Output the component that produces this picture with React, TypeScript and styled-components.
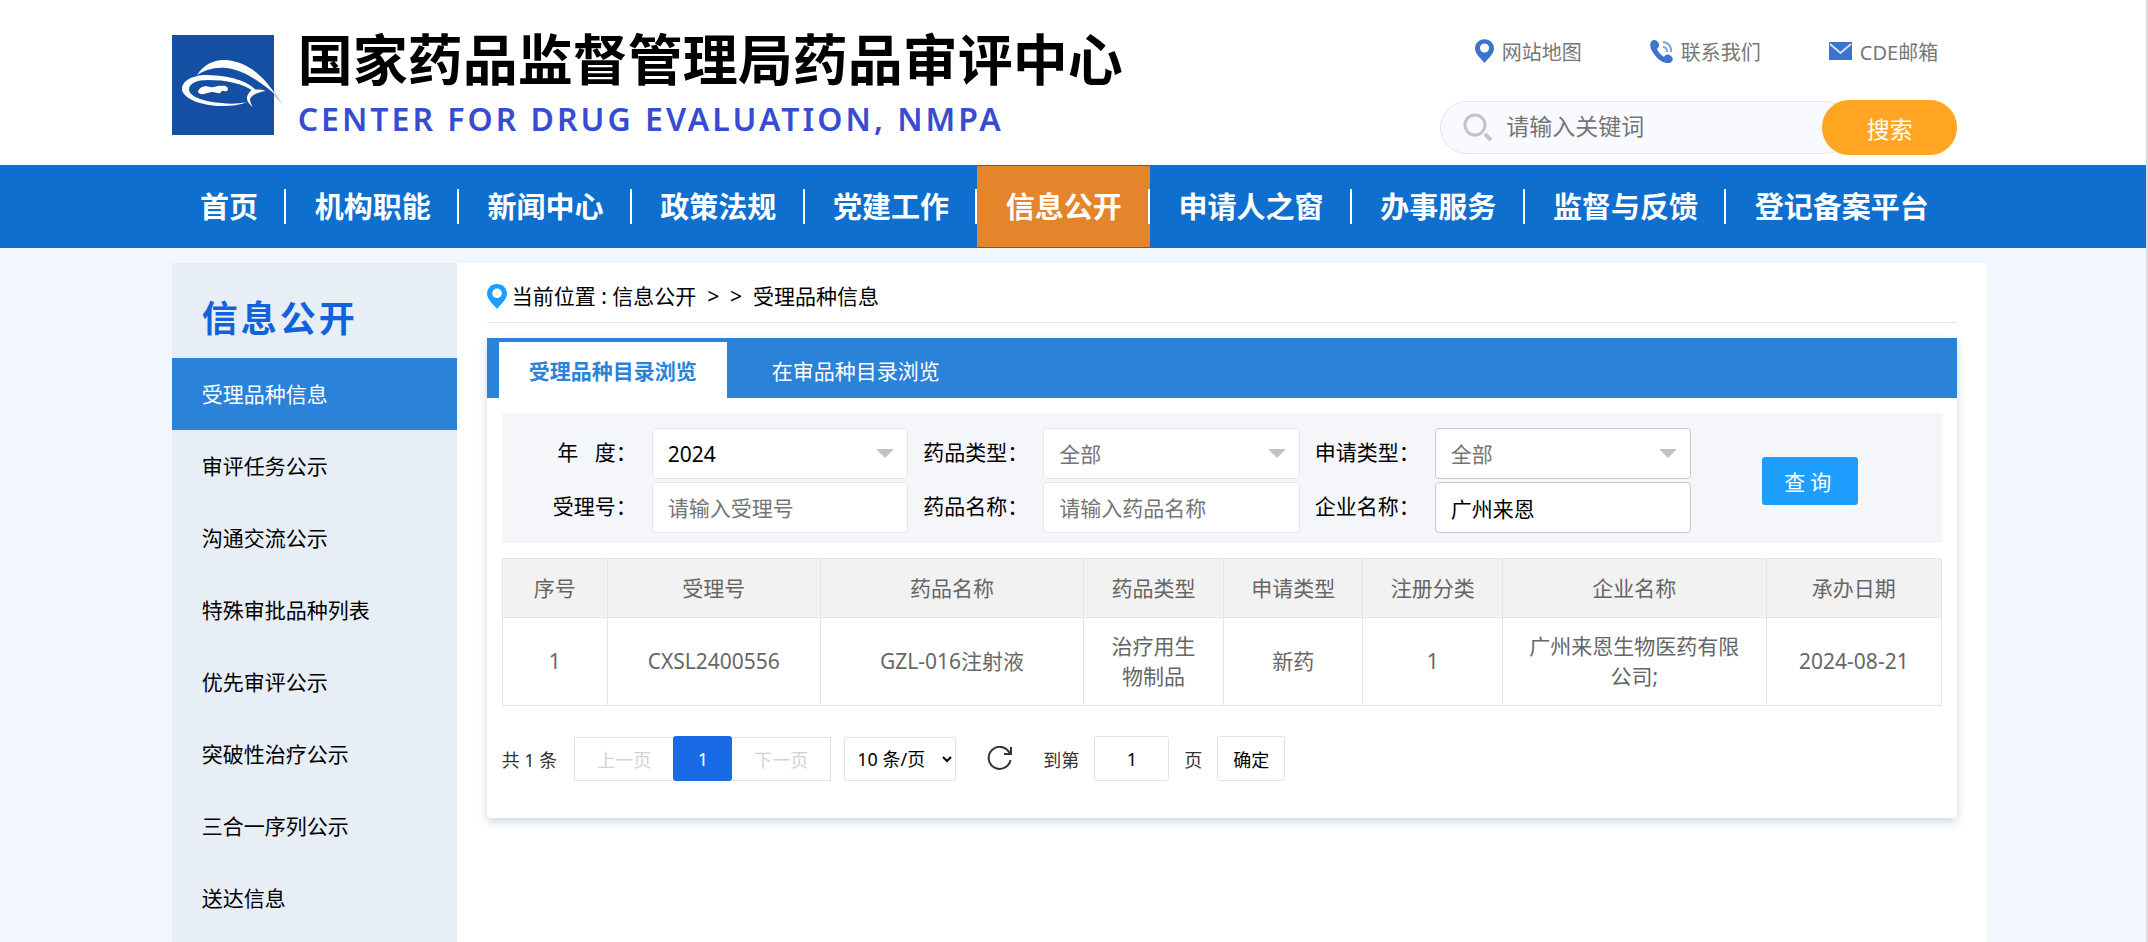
import React from "react";
import styled, { createGlobalStyle, css } from "styled-components";

const GlobalStyle = createGlobalStyle`
  *, *::before, *::after { box-sizing: border-box; }
  body {
    margin: 0;
    background: #f2f7ff;
    color: #000;
    font-family: "Noto Sans", "Noto Sans CJK SC", sans-serif;
    font-size: 21px;
  }
  button, input, select { font: inherit; margin: 0; }
  a { color: inherit; text-decoration: none; }
  ul { list-style: none; margin: 0; padding: 0; }
`;

const Page = styled.div`
  min-height: 100vh;
  display: flex;
  flex-direction: column;
  border-right: 2px solid #dcdcdc;
`;

const Header = styled.header`
  height: 165px;
  padding: 0 calc(7.4% + 30px) 0 8%;
  background: #fff;
  display: flex;
  justify-content: space-between;
`;

const Brand = styled.a`
  display: flex;
  align-items: flex-start;
  gap: 14px;
  padding-top: 35px;
`;

const BrandText = styled.div`
  display: flex;
  flex-direction: column;
  white-space: nowrap;
`;

const BrandName = styled.h1`
  margin: 0;
  height: 62px;
  line-height: 48px;
  font-size: 55px;
  font-weight: 700;
`;

const BrandSub = styled.p`
  margin: 0;
  line-height: 44px;
  font-size: 32px;
  font-weight: 600;
  letter-spacing: 3px;
  color: #374cd0;
`;

const HeaderSide = styled.div`
  width: 517px;
  padding-top: 36px;
`;

const QuickLinks = styled.ul`
  display: flex;
  justify-content: flex-end;
  gap: 68px;
  height: 64px;
  padding-right: 19px;
`;

const QuickLink = styled.a`
  display: flex;
  align-items: center;
  gap: 8px;
  height: 30px;
  font-size: 20px;
  color: #777;
`;

const Search = styled.form`
  display: flex;
  align-items: center;
  height: 55px;
`;

const SearchBox = styled.label`
  flex: 1;
  min-width: 0;
  height: 53px;
  margin-right: -30px;
  padding: 0 40px 0 22px;
  display: flex;
  align-items: center;
  gap: 14px;
  border: 1px solid #e5e5e5;
  border-radius: 27px;
  background: #f9faff;
`;

const SearchInput = styled.input`
  flex: 1;
  min-width: 0;
  border: 0;
  outline: 0;
  padding: 0 0 3px;
  background: transparent;
  font-size: 23px;
  &::placeholder { color: #757575; }
`;

const SearchButton = styled.button`
  position: relative;
  flex: none;
  width: 135px;
  height: 55px;
  border: 0;
  border-radius: 27px;
  background: #ffa522;
  color: #fff;
  font-size: 23px;
`;

const Nav = styled.nav`
  padding: 0 calc(7.4% + 30px) 0 8%;
  background: #0e6fce;
`;

const NavList = styled.ul`
  display: flex;
  height: 83px;
  padding: 1px 0;
`;

const NavItem = styled.li<{ $active?: boolean }>`
  flex: 1 1 auto;
  display: flex;
  align-items: center;
  background: ${(p) => (p.$active ? "#e4852c" : "transparent")};
  &:not(:last-child)::after {
    content: "";
    width: 2px;
    height: 35px;
    margin-left: -2px;
    background: #fff;
  }
`;

const NavLink = styled.a`
  flex: 1;
  padding: 0 28px;
  text-align: center;
  white-space: nowrap;
  font-size: 29px;
  font-weight: 700;
  line-height: 40px;
  color: #fff;
`;

const Body = styled.div`
  flex: 1;
  display: flex;
  margin: 15px 7.4% 0 8%;
`;

const Sidebar = styled.aside`
  width: 285px;
  flex: none;
  background: #e7eef6;
`;

const SideTitle = styled.h2`
  height: 95px;
  margin: 0;
  padding: 15px 30px 0;
  line-height: 82px;
  font-size: 36px;
  font-weight: 700;
  letter-spacing: 3px;
  color: #1063d8;
`;

const SideLink = styled.a<{ $active?: boolean }>`
  display: block;
  padding: 0 30px;
  line-height: 72px;
  ${(p) =>
    p.$active &&
    css`
      background: #2a83d9;
      color: #fff;
    `}
`;

const Main = styled.main`
  flex: 1;
  min-width: 0;
  padding: 0 30px 40px;
  background: #fff;
`;

const Breadcrumb = styled.nav`
  display: flex;
  align-items: center;
  gap: 5px;
  height: 60px;
  padding-top: 8px;
  border-bottom: 1px solid #e6e6e6;
`;

const Trail = styled.span`
  line-height: 30px;
  padding-bottom: 2px;
`;

const Card = styled.section`
  margin-top: 15px;
  min-height: 480px;
  border-radius: 4px;
  background: #fff;
  box-shadow: 0 4px 10px rgba(0, 62, 130, 0.2);
`;

const Tabs = styled.div`
  display: flex;
  height: 60px;
  padding: 4px 12px 0;
  background: #2a83d9;
`;

const Tab = styled.button<{ $active?: boolean }>`
  border: 0;
  padding: 0 30px;
  margin-right: 15px;
  background: ${(p) => (p.$active ? "#fff" : "transparent")};
  color: ${(p) => (p.$active ? "#2a83d9" : "#fff")};
  font-weight: ${(p) => (p.$active ? 700 : 400)};
`;

const CardBody = styled.div`
  padding: 15px;
`;

const Filters = styled.form`
  display: grid;
  grid-template-columns: minmax(0, 1fr) 251px;
  align-items: center;
  padding: 15px 0 10px 15px;
  background: #f4f6fa;
`;

const FilterGrid = styled.div`
  display: grid;
  grid-template-columns: repeat(3, minmax(0, 1fr));
  row-gap: 3px;
`;

const Field = styled.div`
  display: flex;
`;

const FieldLabel = styled.label`
  width: 135px;
  padding-right: 15px;
  line-height: 49px;
  text-align: right;
  white-space: pre;
`;

const Control = styled.div`
  position: relative;
  flex: 1;
  min-width: 0;
`;

const controlBox = css<{ $strong?: boolean }>`
  display: block;
  width: 100%;
  height: 51px;
  padding: 0 15px;
  border: 1px solid ${(p) => (p.$strong ? "#c9c9c9" : "#e6e6e6")};
  border-radius: 4px;
  outline: 0;
  background: #fff;
`;

const TextInput = styled.input<{ $strong?: boolean }>`
  ${controlBox}
  color: #000;
  &::placeholder { color: #757575; }
`;

const FilterSelect = styled.select<{ $strong?: boolean; $muted?: boolean }>`
  ${controlBox}
  appearance: none;
  color: ${(p) => (p.$muted ? "#757575" : "#000")};
`;

const Arrow = styled.span`
  position: absolute;
  right: 14px;
  top: 21px;
  border: 9px solid transparent;
  border-top-color: #c2c2c2;
  border-bottom-width: 0;
  pointer-events: none;
`;

const QueryButton = styled.button`
  width: 96px;
  height: 48px;
  margin-left: 71px;
  padding: 0;
  border: 0;
  border-radius: 3px;
  background: #1e9fff;
  color: #fff;
  letter-spacing: 5px;
`;

const Table = styled.table`
  width: 100%;
  margin-top: 15px;
  border-collapse: collapse;
  table-layout: fixed;
  color: #666;
  line-height: 30px;
  th, td {
    padding: 13px 22px 14px;
    border: 1px solid #e6e6e6;
    text-align: center;
    font-weight: 400;
  }
  th {
    padding: 14px 0;
    background: #f2f2f2;
  }
`;

const Col = styled.col<{ $w: number }>`
  width: ${(p) => p.$w}%;
`;

const Pager = styled.div`
  display: flex;
  align-items: center;
  height: 45px;
  margin-top: 30px;
  font-size: 18px;
  color: #333;
  white-space: nowrap;
`;

const PageGroup = styled.div`
  display: flex;
  align-items: center;
  margin: 0 13px 0 17px;
`;

const StepButton = styled.button`
  width: 99px;
  height: 44px;
  border: 1px solid #e2e2e2;
  background: #fff;
  padding: 0;
  color: #d2d2d2;
  &:first-child { border-right: 0; }
  &:last-child { border-left: 0; }
`;

const PageButton = styled.button`
  width: 59px;
  height: 45px;
  border: 0;
  border-radius: 3px;
  background: #196ae6;
  color: #fff;
`;

const SizeSelect = styled.select`
  width: 112px;
  height: 44px;
  padding: 0 0 0 8px;
  border: 1px solid #e2e2e2;
  border-radius: 3px;
  background: #fff;
  color: #000;
`;

const RefreshButton = styled.button`
  display: flex;
  margin: 0 31px;
  padding: 0;
  border: 0;
  background: none;
`;

const JumpInput = styled.input`
  width: 75px;
  height: 45px;
  margin: 0 15px;
  border: 1px solid #e2e2e2;
  border-radius: 3px;
  text-align: center;
`;

const ConfirmButton = styled.button`
  width: 68px;
  height: 45px;
  margin-left: 15px;
  padding: 0;
  border: 1px solid #e2e2e2;
  border-radius: 3px;
  background: #fff;
  color: #000;
`;

const Logo = () => (
  <svg width="112" height="100" viewBox="0 0 112 100" aria-hidden="true">
    <rect width="102" height="100" fill="#144fa3" />
    <path d="M102 55L111 70L102 61Z" fill="#c3cfe4" />
    <path d="M25 40C32 29 43 24 54 25C77 27 92 42 104 60C90 49 74 35 54 33C42 32 33 35 25 40Z" fill="#fff" />
    <path
      fillRule="evenodd"
      fill="#fff"
      d="M83 54C72 44 53 40 32 40C18 41 9 47 10 55C12 64 30 71 50 71C60 71 68 70 75 67C66 69 57 69 50 68C33 67 18 62 17 55C17 48 25 45 36 45C54 45 70 48 83 57Z"
    />
    <path d="M80 54C84 55 89 54 94 56C86 57 80 60 78 64C78 67 79 69 81 72C75 68 73 63 77 58Z" fill="#fff" />
    <path d="M26 57C27 52 33 50 38 52C43 53 45 50 49 51C54 50 58 53 55 56C52 57 51 54 49 57C47 60 44 57 41 57C36 57 29 62 26 57Z" fill="#fff" />
  </svg>
);

const PinIcon = ({ color, size }: { color: string; size: number }) => (
  <svg width={size} height={Math.round(size * 1.25)} viewBox="0 0 20 25" aria-hidden="true">
    <path
      fillRule="evenodd"
      fill={color}
      d="M10 0C4.300 0 0 4.200 0 9.800C0 15.500 6 20 10 25C14 20 20 15.500 20 9.800C20 4.200 15.700 0 10 0ZM10 4.500A4.800 4.800 0 1 1 10 14.100A4.800 4.800 0 1 1 10 4.500Z"
    />
  </svg>
);

const PhoneIcon = () => (
  <svg width="23" height="24" viewBox="0 0 23 24" aria-hidden="true">
    <path
      fill="#3b74cc"
      d="M1 3C3 0 6 1 8 3C10 6 9 8 7 10C8 13 11 16 14 18C16 15 18 15 21 17C24 20 23 22 20 24C14 25 8 21 4 15C1 11 -1 6 1 3Z"
    />
    <path d="M13 8C16 8 17 10 17 13M13 3C18 3 22 8 21 13" fill="none" stroke="#7ea3de" strokeWidth="2" />
  </svg>
);

const MailIcon = () => (
  <svg width="23" height="18" viewBox="0 0 23 18" aria-hidden="true">
    <rect width="23" height="18" fill="#3b74cc" />
    <path d="M1 2L11.500 11L22 2" fill="none" stroke="#d5e1f4" strokeWidth="2" />
  </svg>
);

const SearchIcon = () => (
  <svg width="29" height="29" viewBox="0 0 29 29" aria-hidden="true">
    <circle cx="12" cy="12" r="10" fill="none" stroke="#c4c4c4" strokeWidth="3" />
    <path d="M22 21L28 27" stroke="#c4c4c4" strokeWidth="4" />
  </svg>
);

const RefreshIcon = () => (
  <svg width="25" height="25" viewBox="0 0 25 25" fill="none" stroke="#333" strokeWidth="2" aria-hidden="true">
    <path d="M23 8A11 11 0 1 0 23.500 14" />
    <path d="M24 1V8H17" />
  </svg>
);

const navItems = [
  "首页", "机构职能", "新闻中心", "政策法规", "党建工作",
  "信息公开", "申请人之窗", "办事服务", "监督与反馈", "登记备案平台",
];

const sideItems = [
  "受理品种信息", "审评任务公示", "沟通交流公示", "特殊审批品种列表",
  "优先审评公示", "突破性治疗公示", "三合一序列公示", "送达信息",
];

const columns = [
  { name: "序号", width: 7.3 },
  { name: "受理号", width: 14.8 },
  { name: "药品名称", width: 18.3 },
  { name: "药品类型", width: 9.7 },
  { name: "申请类型", width: 9.7 },
  { name: "注册分类", width: 9.7 },
  { name: "企业名称", width: 18.3 },
  { name: "承办日期", width: 12.2 },
];

const rows = [
  ["1", "CXSL2400556", "GZL-016注射液", "治疗用生物制品", "新药", "1", "广州来恩生物医药有限公司;", "2024-08-21"],
];

type FieldProps = {
  id: string;
  label: string;
  kind: "select" | "text";
  value?: string;
  placeholder?: string;
  muted?: boolean;
  strong?: boolean;
};

const fields: FieldProps[] = [
  { id: "year", label: "年\u00a0\u00a0\u00a0度：", kind: "select", value: "2024" },
  { id: "drugType", label: "药品类型：", kind: "select", value: "全部", muted: true },
  { id: "applyType", label: "申请类型：", kind: "select", value: "全部", muted: true, strong: true },
  { id: "acceptNo", label: "受理号：", kind: "text", placeholder: "请输入受理号" },
  { id: "drugName", label: "药品名称：", kind: "text", placeholder: "请输入药品名称" },
  { id: "company", label: "企业名称：", kind: "text", value: "广州来恩", strong: true },
];

const FilterField = ({ id, label, kind, value, placeholder, muted, strong }: FieldProps) => (
  <Field>
    <FieldLabel htmlFor={id}>{label}</FieldLabel>
    <Control>
      {kind === "select" ? (
        <>
          <FilterSelect id={id} $muted={muted} $strong={strong} defaultValue={value}>
            <option>{value}</option>
          </FilterSelect>
          <Arrow />
        </>
      ) : (
        <TextInput id={id} type="text" $strong={strong} defaultValue={value} placeholder={placeholder} />
      )}
    </Control>
  </Field>
);

export default function App() {
  return (
    <>
      <GlobalStyle />
      <Page>
        <Header>
          <Brand href="#">
            <Logo />
            <BrandText>
              <BrandName>国家药品监督管理局药品审评中心</BrandName>
              <BrandSub>CENTER FOR DRUG EVALUATION, NMPA</BrandSub>
            </BrandText>
          </Brand>
          <HeaderSide>
            <QuickLinks>
              <li><QuickLink href="#"><PinIcon color="#3b74cc" size={19} />网站地图</QuickLink></li>
              <li><QuickLink href="#"><PhoneIcon />联系我们</QuickLink></li>
              <li><QuickLink href="#"><MailIcon />CDE邮箱</QuickLink></li>
            </QuickLinks>
            <Search onSubmit={(e) => e.preventDefault()}>
              <SearchBox>
                <SearchIcon />
                <SearchInput type="text" placeholder="请输入关键词" aria-label="请输入关键词" />
              </SearchBox>
              <SearchButton type="submit">搜索</SearchButton>
            </Search>
          </HeaderSide>
        </Header>

        <Nav>
          <NavList>
            {navItems.map((item) => (
              <NavItem key={item} $active={item === "信息公开"}>
                <NavLink href="#">{item}</NavLink>
              </NavItem>
            ))}
          </NavList>
        </Nav>

        <Body>
          <Sidebar>
            <SideTitle>信息公开</SideTitle>
            <ul>
              {sideItems.map((item, i) => (
                <li key={item}>
                  <SideLink href="#" $active={i === 0}>{item}</SideLink>
                </li>
              ))}
            </ul>
          </Sidebar>

          <Main>
            <Breadcrumb>
              <PinIcon color="#1e9fff" size={20} />
              <Trail>
                当前位置 : <a href="#">信息公开</a>&nbsp;&nbsp;&gt;&nbsp;&nbsp;&gt;&nbsp;&nbsp;<a href="#">受理品种信息</a>
              </Trail>
            </Breadcrumb>

            <Card>
              <Tabs>
                <Tab type="button" $active>受理品种目录浏览</Tab>
                <Tab type="button">在审品种目录浏览</Tab>
              </Tabs>
              <CardBody>
                <Filters onSubmit={(e) => e.preventDefault()}>
                  <FilterGrid>
                    {fields.map((f) => <FilterField key={f.id} {...f} />)}
                  </FilterGrid>
                  <QueryButton type="submit">查询</QueryButton>
                </Filters>

                <Table>
                  <colgroup>
                    {columns.map((c) => <Col key={c.name} $w={c.width} />)}
                  </colgroup>
                  <thead>
                    <tr>{columns.map((c) => <th key={c.name} scope="col">{c.name}</th>)}</tr>
                  </thead>
                  <tbody>
                    {rows.map((row) => (
                      <tr key={row[1]}>{row.map((cell, i) => <td key={i}>{cell}</td>)}</tr>
                    ))}
                  </tbody>
                </Table>

                <Pager>
                  <span>共 1 条</span>
                  <PageGroup>
                    <StepButton type="button" disabled>上一页</StepButton>
                    <PageButton type="button">1</PageButton>
                    <StepButton type="button" disabled>下一页</StepButton>
                  </PageGroup>
                  <SizeSelect aria-label="每页条数">
                    <option>10 条/页</option>
                  </SizeSelect>
                  <RefreshButton type="button" aria-label="刷新"><RefreshIcon /></RefreshButton>
                  <label htmlFor="jump">到第</label>
                  <JumpInput id="jump" type="text" defaultValue="1" />
                  <span>页</span>
                  <ConfirmButton type="button">确定</ConfirmButton>
                </Pager>
              </CardBody>
            </Card>
          </Main>
        </Body>
      </Page>
    </>
  );
}
